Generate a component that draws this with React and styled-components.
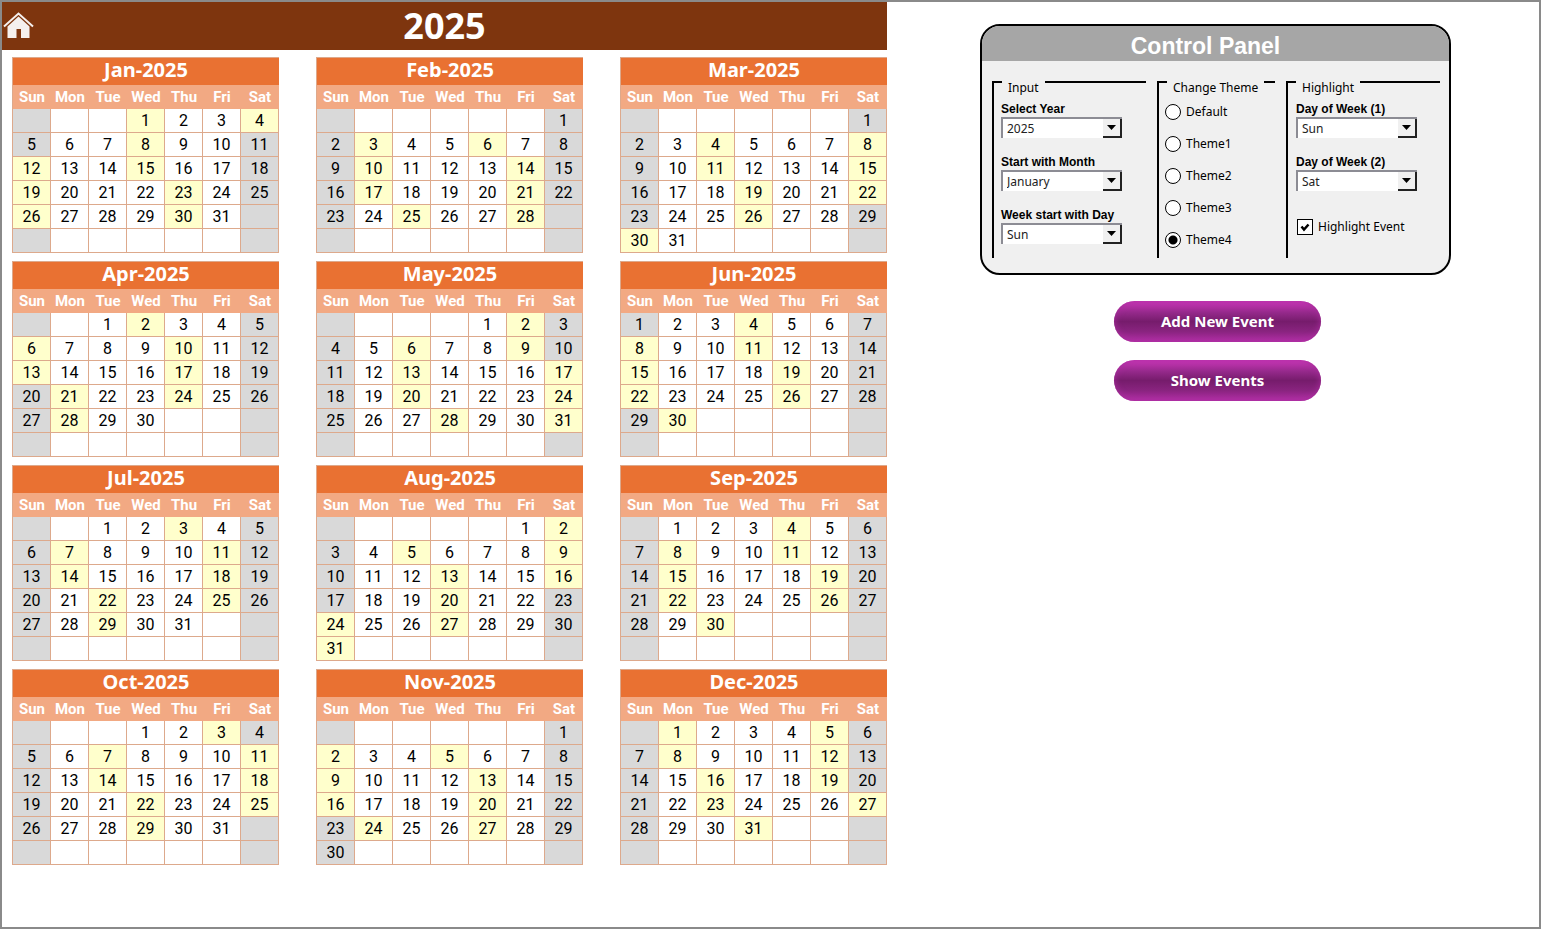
import { useState } from "react";
import styled, { createGlobalStyle, ThemeProvider } from "styled-components";

const MONTHS = [
  "January", "February", "March", "April", "May", "June",
  "July", "August", "September", "October", "November", "December",
];
const DAYS = ["Sun", "Mon", "Tue", "Wed", "Thu", "Fri", "Sat"];
const YEARS = [2023, 2024, 2025, 2026, 2027];

// event days of 2025, by month
const EVENTS = {
  2025: [
    [1, 4, 8, 12, 15, 19, 23, 26, 30],
    [3, 6, 10, 14, 17, 21, 25, 28],
    [4, 8, 11, 15, 19, 22, 26, 30],
    [2, 6, 10, 13, 17, 21, 24, 28],
    [2, 6, 9, 13, 17, 20, 24, 28, 31],
    [4, 8, 11, 15, 19, 22, 26, 30],
    [3, 7, 11, 14, 18, 22, 25, 29],
    [2, 5, 9, 13, 16, 20, 24, 27, 31],
    [4, 8, 11, 15, 19, 22, 26, 30],
    [3, 7, 11, 14, 18, 22, 25, 29],
    [2, 5, 9, 13, 16, 20, 24, 27],
    [1, 5, 8, 12, 16, 19, 23, 27, 31],
  ],
};

const THEMES = {
  Default: { banner: "#1f3864", title: "#4472c4", week: "#8faadc", line: "#b4c7e7" },
  Theme1: { banner: "#385723", title: "#70ad47", week: "#a9d18e", line: "#c5e0b4" },
  Theme2: { banner: "#7f6000", title: "#bf9000", week: "#ffd966", line: "#ffe699" },
  Theme3: { banner: "#3b3838", title: "#767171", week: "#afabab", line: "#d0cece" },
  Theme4: { banner: "#7e350e", title: "#e97132", week: "#f2a983", line: "#dda98c" },
};

const GlobalStyle = createGlobalStyle`
  * {
    box-sizing: border-box;
  }
  body {
    margin: 0;
    background: #fff;
    font-family: "Noto Sans", sans-serif;
  }
`;

const Page = styled.div`
  min-height: 100vh;
  border: 2px solid #8a8a8a;
  display: grid;
  grid-template-columns: 885fr 652fr;
  align-items: start;
`;

const Banner = styled.header`
  display: grid;
  grid-template-columns: 36px 1fr 36px;
  align-items: center;
  height: 48px;
  background: ${({ theme }) => theme.banner};
`;

const HomeLink = styled.a`
  display: flex;
  color: #f5f0ee;
`;

const BannerYear = styled.h1`
  margin: 0;
  text-align: center;
  color: #fff;
  font-size: 36px;
  line-height: 48px;
  font-weight: 700;
`;

const Months = styled.div`
  display: grid;
  grid-template-columns: repeat(3, 1fr);
  gap: 8px 37px;
  padding: 7px 0 8px 10px;
`;

const MonthTable = styled.table`
  width: 100%;
  table-layout: fixed;
  border-collapse: separate;
  border-spacing: 0;
  border: solid ${({ theme }) => theme.line};
  border-width: 1px 0 0 1px;
  font-family: Roboto, sans-serif;
`;

const MonthTitle = styled.th`
  height: 27px;
  padding: 0 0 3px;
  background: ${({ theme }) => theme.title};
  color: #fff;
  font-family: "Comic Sans MS", "Noto Sans", sans-serif;
  font-size: 20px;
  line-height: 24px;
  font-weight: 700;
`;

const WeekDay = styled.th`
  height: 24px;
  padding: 0;
  background: ${({ theme }) => theme.week};
  color: #fff;
  font-size: 15px;
  line-height: 22px;
  font-weight: 700;
`;

const Day = styled.td`
  height: 24px;
  padding: 1px 0 0;
  border: solid ${({ theme }) => theme.line};
  border-width: 0 1px 1px 0;
  background: ${({ $event, $off }) => ($event ? "#ffffcc" : $off ? "#d9d9d9" : "#fff")};
  color: #000;
  text-align: center;
  font-size: 16px;
  line-height: 22px;
`;

const Side = styled.aside`
  padding: 22px 88px 0 93px;
`;

const Panel = styled.section`
  border: 2px solid #000;
  border-radius: 20px;
  overflow: hidden;
  background: #f0f0f0;
`;

const PanelTitle = styled.h2`
  margin: 0;
  padding: 6px 20px 0 0;
  height: 35px;
  background: #a6a6a6;
  color: #fff;
  text-align: center;
  font-family: "Liberation Sans", Arial, sans-serif;
  font-size: 23px;
  line-height: 28px;
  font-weight: 700;
`;

const PanelBody = styled.div`
  display: grid;
  grid-template-columns: 154fr 118fr 154fr;
  gap: 11px;
  padding: 7px 9px 15px 10px;
`;

const Group = styled.fieldset`
  min-width: 0;
  height: 190px;
  margin: 0;
  padding: 0 0 0 ${({ $inset }) => $inset || 8}px;
  border: solid #000;
  border-width: 2px 0 0 2px;
  font-size: 12px;
`;

const Legend = styled.legend`
  margin-left: ${({ $shift }) => $shift || 0}px;
  padding: 12px 6px 0;
  line-height: 16px;
  white-space: nowrap;
`;

const Field = styled.div`
  display: flex;
  flex-direction: column;
  padding-top: 6px;
  margin-bottom: 11px;
`;

const FieldLabel = styled.label`
  font-family: "Liberation Sans", Arial, sans-serif;
  font-size: 12px;
  line-height: 15px;
  font-weight: 700;
  white-space: nowrap;
`;

const SelectBox = styled.div`
  position: relative;
  width: 121px;
  height: 21px;
`;

const Select = styled.select`
  appearance: none;
  width: 100%;
  height: 100%;
  padding: 0 20px 0 4px;
  border: solid #8c8c94;
  border-width: 2px 0 0 2px;
  border-radius: 0;
  background: #fff;
  color: #222;
  font-family: inherit;
  font-size: 12px;
`;

const Arrow = styled.span`
  position: absolute;
  top: 2px;
  right: 0;
  bottom: 0;
  width: 19px;
  display: flex;
  align-items: center;
  justify-content: center;
  border: solid #222;
  border-width: 0 2px 2px 0;
  background: #f0f0f0;
  pointer-events: none;
`;

const Option = styled.label`
  display: flex;
  align-items: center;
  gap: 5px;
  height: 16px;
  margin-bottom: 16px;
  line-height: 16px;
  white-space: nowrap;
`;

const Options = styled.div`
  padding-top: 8px;
`;

const Radio = styled.input`
  appearance: none;
  flex: none;
  width: 16px;
  height: 16px;
  margin: 0;
  border: 1px solid #000;
  border-radius: 50%;
  background: #fff;
  &:checked {
    background: radial-gradient(circle, #000 4px, #fff 5px);
  }
`;

const CheckRow = styled(Option)`
  margin: 28px 0 0 1px;
`;

const CheckBox = styled.span`
  position: relative;
  display: flex;
  width: 16px;
  height: 16px;
  svg {
    position: absolute;
    inset: 0;
    pointer-events: none;
  }
`;

const Check = styled.input`
  appearance: none;
  width: 16px;
  height: 16px;
  margin: 0;
  border: 1px solid #000;
  background: #fff;
`;

const Actions = styled.div`
  display: flex;
  flex-direction: column;
  align-items: center;
  gap: 18px;
  padding: 26px 0 0 4px;
`;

const ActionButton = styled.button`
  width: 207px;
  height: 41px;
  padding: 0 0 2px;
  border: 0;
  border-radius: 21px;
  background: linear-gradient(#cc38ba, #95298b 28%, #761c6c 50%, #8a2480 75%, #b430a8);
  box-shadow: inset 0 0 7px #a82c9c;
  color: #fff;
  font-family: "Noto Sans", sans-serif;
  font-size: 15px;
  font-weight: 700;
  cursor: pointer;
`;

function HomeIcon() {
  return (
    <svg width="34" height="30" viewBox="0 0 34 30" fill="none" aria-hidden="true">
      <path d="M2 15.500 L16.500 2.500 L31 15.500" stroke="currentColor" strokeWidth="2" />
      <path d="M16.500 5.500 L27.500 15.500 V27 H19 V18 H14.500 V27 H5.500 V15.500 Z" fill="currentColor" />
    </svg>
  );
}

function Month({ year, month, weekStart, offDays, highlight }) {
  const date = new Date(year, month, 1);
  const y = date.getFullYear();
  const m = date.getMonth();
  const lead = (date.getDay() - weekStart + 7) % 7;
  const count = new Date(y, m + 1, 0).getDate();
  const events = (highlight && EVENTS[y] && EVENTS[y][m]) || [];
  const header = DAYS.map((_, i) => (i + weekStart) % 7);

  return (
    <MonthTable>
      <thead>
        <tr>
          <MonthTitle colSpan={7}>{MONTHS[m].slice(0, 3)}-{y}</MonthTitle>
        </tr>
        <tr>
          {header.map((d) => (
            <WeekDay key={d} scope="col">{DAYS[d]}</WeekDay>
          ))}
        </tr>
      </thead>
      <tbody>
        {[0, 1, 2, 3, 4, 5].map((row) => (
          <tr key={row}>
            {header.map((d, col) => {
              const n = row * 7 + col - lead + 1;
              const inMonth = n > 0 && n <= count;
              return (
                <Day key={d} $off={offDays.includes(DAYS[d])} $event={inMonth && events.includes(n)}>
                  {inMonth ? n : ""}
                </Day>
              );
            })}
          </tr>
        ))}
      </tbody>
    </MonthTable>
  );
}

function SelectField({ id, label, value, options, onChange }) {
  return (
    <Field>
      <FieldLabel htmlFor={id}>{label}</FieldLabel>
      <SelectBox>
        <Select id={id} value={value} onChange={(e) => onChange(e.target.value)}>
          {options.map((o) => (
            <option key={o}>{o}</option>
          ))}
        </Select>
        <Arrow>
          <svg width="9" height="5" viewBox="0 0 9 5" aria-hidden="true">
            <path d="M0 0H9L4.500 5Z" />
          </svg>
        </Arrow>
      </SelectBox>
    </Field>
  );
}

const App = () => {
  const [year, setYear] = useState("2025");
  const [startMonth, setStartMonth] = useState("January");
  const [weekStart, setWeekStart] = useState("Sun");
  const [themeName, setThemeName] = useState("Theme4");
  const [day1, setDay1] = useState("Sun");
  const [day2, setDay2] = useState("Sat");
  const [highlight, setHighlight] = useState(true);

  return (
    <ThemeProvider theme={THEMES[themeName]}>
      <GlobalStyle />
      <Page>
        <main>
          <Banner>
            <HomeLink href="#" aria-label="Home">
              <HomeIcon />
            </HomeLink>
            <BannerYear>{year}</BannerYear>
          </Banner>
          <Months>
            {MONTHS.map((name, i) => (
              <Month
                key={name}
                year={Number(year)}
                month={MONTHS.indexOf(startMonth) + i}
                weekStart={DAYS.indexOf(weekStart)}
                offDays={[day1, day2]}
                highlight={highlight}
              />
            ))}
          </Months>
        </main>
        <Side>
          <Panel>
            <PanelTitle>Control Panel</PanelTitle>
            <PanelBody>
              <Group $inset={7}>
                <Legend $shift={1}>Input</Legend>
                <SelectField id="year" label="Select Year" value={year} options={YEARS} onChange={setYear} />
                <SelectField id="month" label="Start with Month" value={startMonth} options={MONTHS} onChange={setStartMonth} />
                <SelectField id="week" label="Week start with Day" value={weekStart} options={DAYS} onChange={setWeekStart} />
              </Group>
              <Group $inset={6}>
                <Legend $shift={2}>Change Theme</Legend>
                <Options>
                  {Object.keys(THEMES).map((name) => (
                    <Option key={name}>
                      <Radio
                        type="radio"
                        name="theme"
                        checked={themeName === name}
                        onChange={() => setThemeName(name)}
                      />
                      {name}
                    </Option>
                  ))}
                </Options>
              </Group>
              <Group $inset={8}>
                <Legend>Highlight</Legend>
                <SelectField id="day1" label="Day of Week (1)" value={day1} options={DAYS} onChange={setDay1} />
                <SelectField id="day2" label="Day of Week (2)" value={day2} options={DAYS} onChange={setDay2} />
                <CheckRow>
                  <CheckBox>
                    <Check type="checkbox" checked={highlight} onChange={(e) => setHighlight(e.target.checked)} />
                    {highlight && (
                      <svg width="16" height="16" viewBox="0 0 16 16" fill="none" aria-hidden="true">
                        <path d="M4.500 7.500 L7 10.500 L11.500 5.500" stroke="#000" strokeWidth="2.500" />
                      </svg>
                    )}
                  </CheckBox>
                  Highlight Event
                </CheckRow>
              </Group>
            </PanelBody>
          </Panel>
          <Actions>
            <ActionButton type="button">Add New Event</ActionButton>
            <ActionButton type="button">Show Events</ActionButton>
          </Actions>
        </Side>
      </Page>
    </ThemeProvider>
  );
};

export default App;
